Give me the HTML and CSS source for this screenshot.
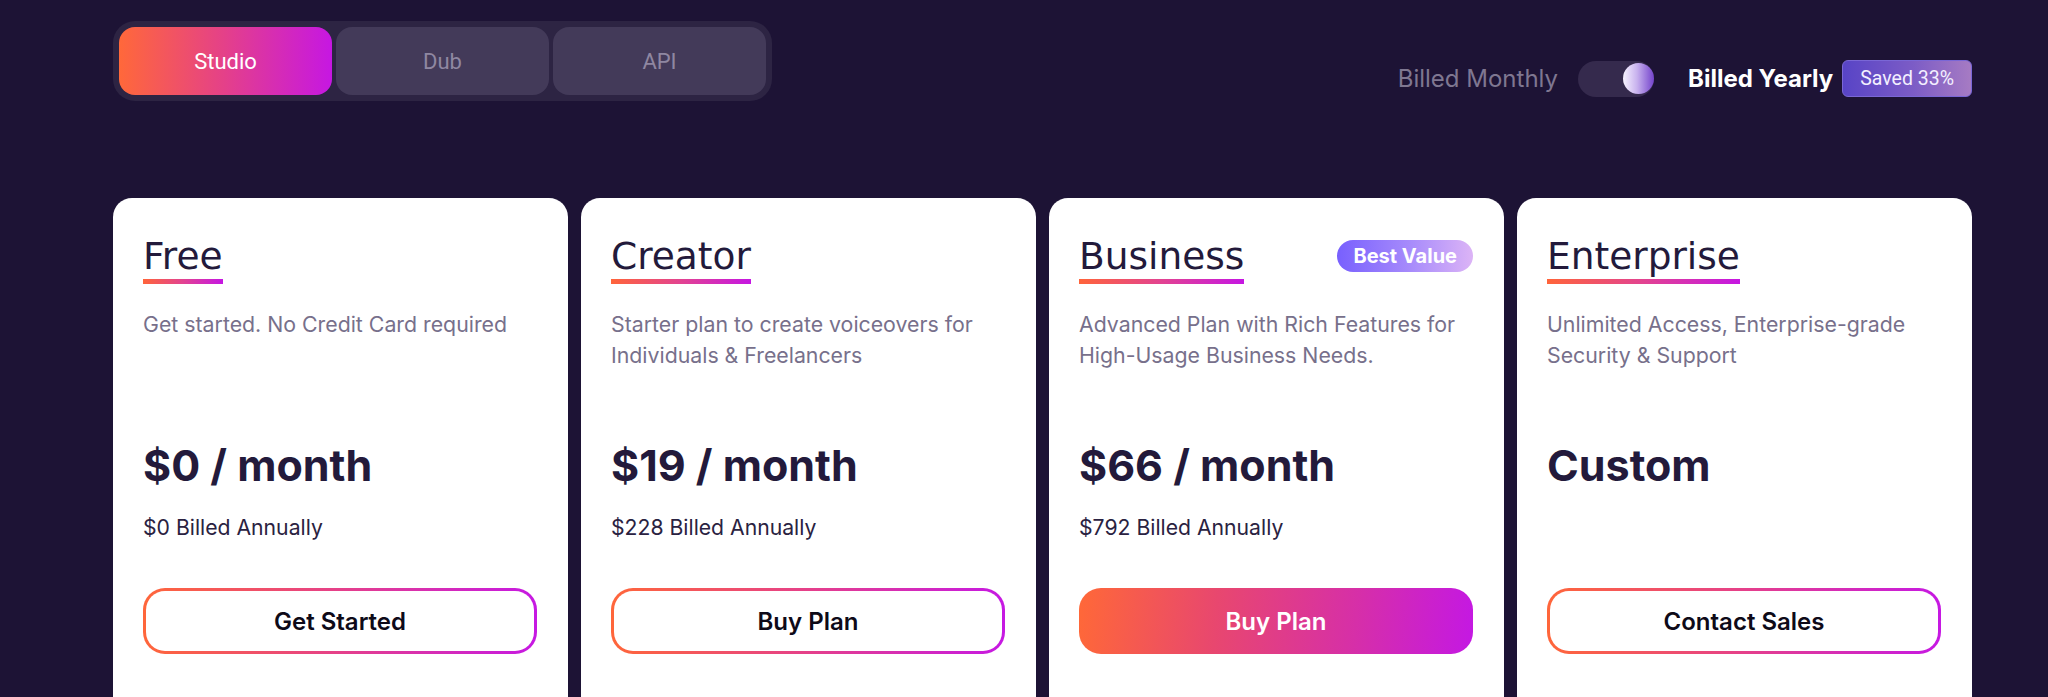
FILE: index.html
```html
<!DOCTYPE html>
<html lang="en">
<head>
<meta charset="utf-8">
<title>Pricing</title>
<link rel="stylesheet" href="styles.css">
</head>
<body>
<div class="page">
  <header class="topbar">
    <nav class="tabs">
      <button class="tab tab-active">Studio</button>
      <button class="tab">Dub</button>
      <button class="tab">API</button>
    </nav>
    <div class="billing">
      <span class="billing-monthly">Billed Monthly</span>
      <span class="switch"><span class="knob"></span></span>
      <span class="billing-yearly">Billed Yearly</span>
      <span class="saved">Saved 33%</span>
    </div>
  </header>

  <section class="plans">
    <article class="card">
      <div class="card-head">
        <h2 class="plan-name">Free</h2>
      </div>
      <p class="plan-desc">Get started. No Credit Card required</p>
      <div class="price">$0 / month</div>
      <div class="billed">$0 Billed Annually</div>
      <button class="cta cta-outline">Get Started</button>
    </article>

    <article class="card">
      <div class="card-head">
        <h2 class="plan-name">Creator</h2>
      </div>
      <p class="plan-desc">Starter plan to create voiceovers for Individuals &amp; Freelancers</p>
      <div class="price">$19 / month</div>
      <div class="billed">$228 Billed Annually</div>
      <button class="cta cta-outline">Buy Plan</button>
    </article>

    <article class="card">
      <div class="card-head">
        <h2 class="plan-name">Business</h2>
        <span class="best">Best Value</span>
      </div>
      <p class="plan-desc">Advanced Plan with Rich Features for High-Usage Business Needs.</p>
      <div class="price">$66 / month</div>
      <div class="billed">$792 Billed Annually</div>
      <button class="cta cta-filled">Buy Plan</button>
    </article>

    <article class="card">
      <div class="card-head">
        <h2 class="plan-name">Enterprise</h2>
      </div>
      <p class="plan-desc">Unlimited Access, Enterprise-grade Security &amp; Support</p>
      <div class="price">Custom</div>
      <div class="billed"></div>
      <button class="cta cta-outline">Contact Sales</button>
    </article>
  </section>
</div>
</body>
</html>
```

FILE: styles.css
```css
html, body {
  margin: 0;
  padding: 0;
  height: 697px;
  overflow: hidden;
  background: #1d1335;
}

body {
  font-family: Inter, "Liberation Sans", sans-serif;
}

.page {
  padding: 21px 76px 0 113px;
}

/* ---------- top bar ---------- */
.topbar {
  display: flex;
  justify-content: space-between;
  align-items: flex-start;
}

.tabs {
  display: flex;
  gap: 4px;
  padding: 6px;
  background: #2d2443;
  border-radius: 22px;
}

.tab {
  width: 213px;
  height: 68px;
  border: 0;
  border-radius: 16px;
  background: #433a59;
  color: #8f87a1;
  font-family: Roboto, "Liberation Sans", sans-serif;
  font-size: 22px;
  cursor: pointer;
}

.tab-active {
  background: linear-gradient(90deg, #ff683a 0%, #e4408a 50%, #c617e2 100%);
  color: #ffffff;
}

.billing {
  display: flex;
  align-items: center;
  margin-top: 39px;
}

.billing-monthly {
  font-size: 24px;
  color: #7f7791;
}

.switch {
  display: flex;
  justify-content: flex-end;
  align-items: center;
  width: 76px;
  height: 36px;
  margin-left: 20px;
  border-radius: 18px;
  background: #352a4d;
}

.knob {
  width: 31px;
  height: 31px;
  border-radius: 50%;
  background: linear-gradient(90deg, #f7f3ff 0%, #c8b2ee 45%, #7443cc 100%);
}

.billing-yearly {
  margin-left: 34px;
  font-size: 24px;
  font-weight: 700;
  color: #ffffff;
}

.saved {
  display: flex;
  align-items: center;
  height: 37px;
  box-sizing: border-box;
  margin-left: 9px;
  padding: 0 17px;
  border: 1px solid #7a67d6;
  border-radius: 6px;
  background: linear-gradient(90deg, #5844c6 0%, #7c5cc6 55%, #a67bc3 100%);
  color: #f3efff;
  font-family: Roboto, "Liberation Sans", sans-serif;
  font-size: 19.5px;
}

/* ---------- plan cards ---------- */
.plans {
  display: grid;
  grid-template-columns: repeat(4, 1fr);
  gap: 13px;
  margin-top: 97px;
}

.card {
  background: #ffffff;
  border-radius: 19px;
  padding: 36px 31px 60px 30px;
  min-height: 440px;
}

.card-head {
  display: flex;
  justify-content: space-between;
  align-items: flex-start;
}

.plan-name {
  display: inline-block;
  margin: 0;
  font-family: "DejaVu Sans", sans-serif;
  font-weight: 400;
  font-size: 37.5px;
  line-height: 44px;
  color: #231a3b;
  padding-bottom: 6px;
  background: linear-gradient(90deg, #ff643a 0%, #e24391 50%, #c516e2 100%) no-repeat left bottom / 100% 5px;
}

.best {
  margin-top: 6px;
  height: 32px;
  line-height: 32px;
  padding: 0 16px;
  border-radius: 16px;
  background: linear-gradient(90deg, #7860fe 0%, #a88cfb 55%, #dcb4f6 100%);
  color: #ffffff;
  font-size: 20px;
  font-weight: 700;
}

.plan-desc {
  margin: 25px 0 0;
  min-height: 62px;
  font-size: 21.3px;
  line-height: 31px;
  color: #77708b;
}

.price {
  margin-top: 67px;
  font-size: 43px;
  line-height: 54px;
  font-weight: 700;
  color: #231a3b;
}

.billed {
  margin-top: 21px;
  height: 28px;
  font-size: 21.2px;
  line-height: 28px;
  color: #2a2241;
}

.cta {
  display: block;
  width: 100%;
  height: 66px;
  margin-top: 47px;
  border-radius: 22px;
  font-family: Inter, "Liberation Sans", sans-serif;
  font-size: 24px;
  font-weight: 600;
  cursor: pointer;
}

.cta-outline {
  border: 3px solid transparent;
  color: #0e0a18;
  background:
    linear-gradient(#ffffff, #ffffff) padding-box,
    linear-gradient(90deg, #ff663a 0%, #e5408a 50%, #c618e3 100%) border-box;
}

.cta-filled {
  border: 0;
  color: #ffffff;
  background: linear-gradient(95deg, #ff6838 0%, #e8476f 35%, #d62fa8 70%, #c418e3 100%);
}
```
